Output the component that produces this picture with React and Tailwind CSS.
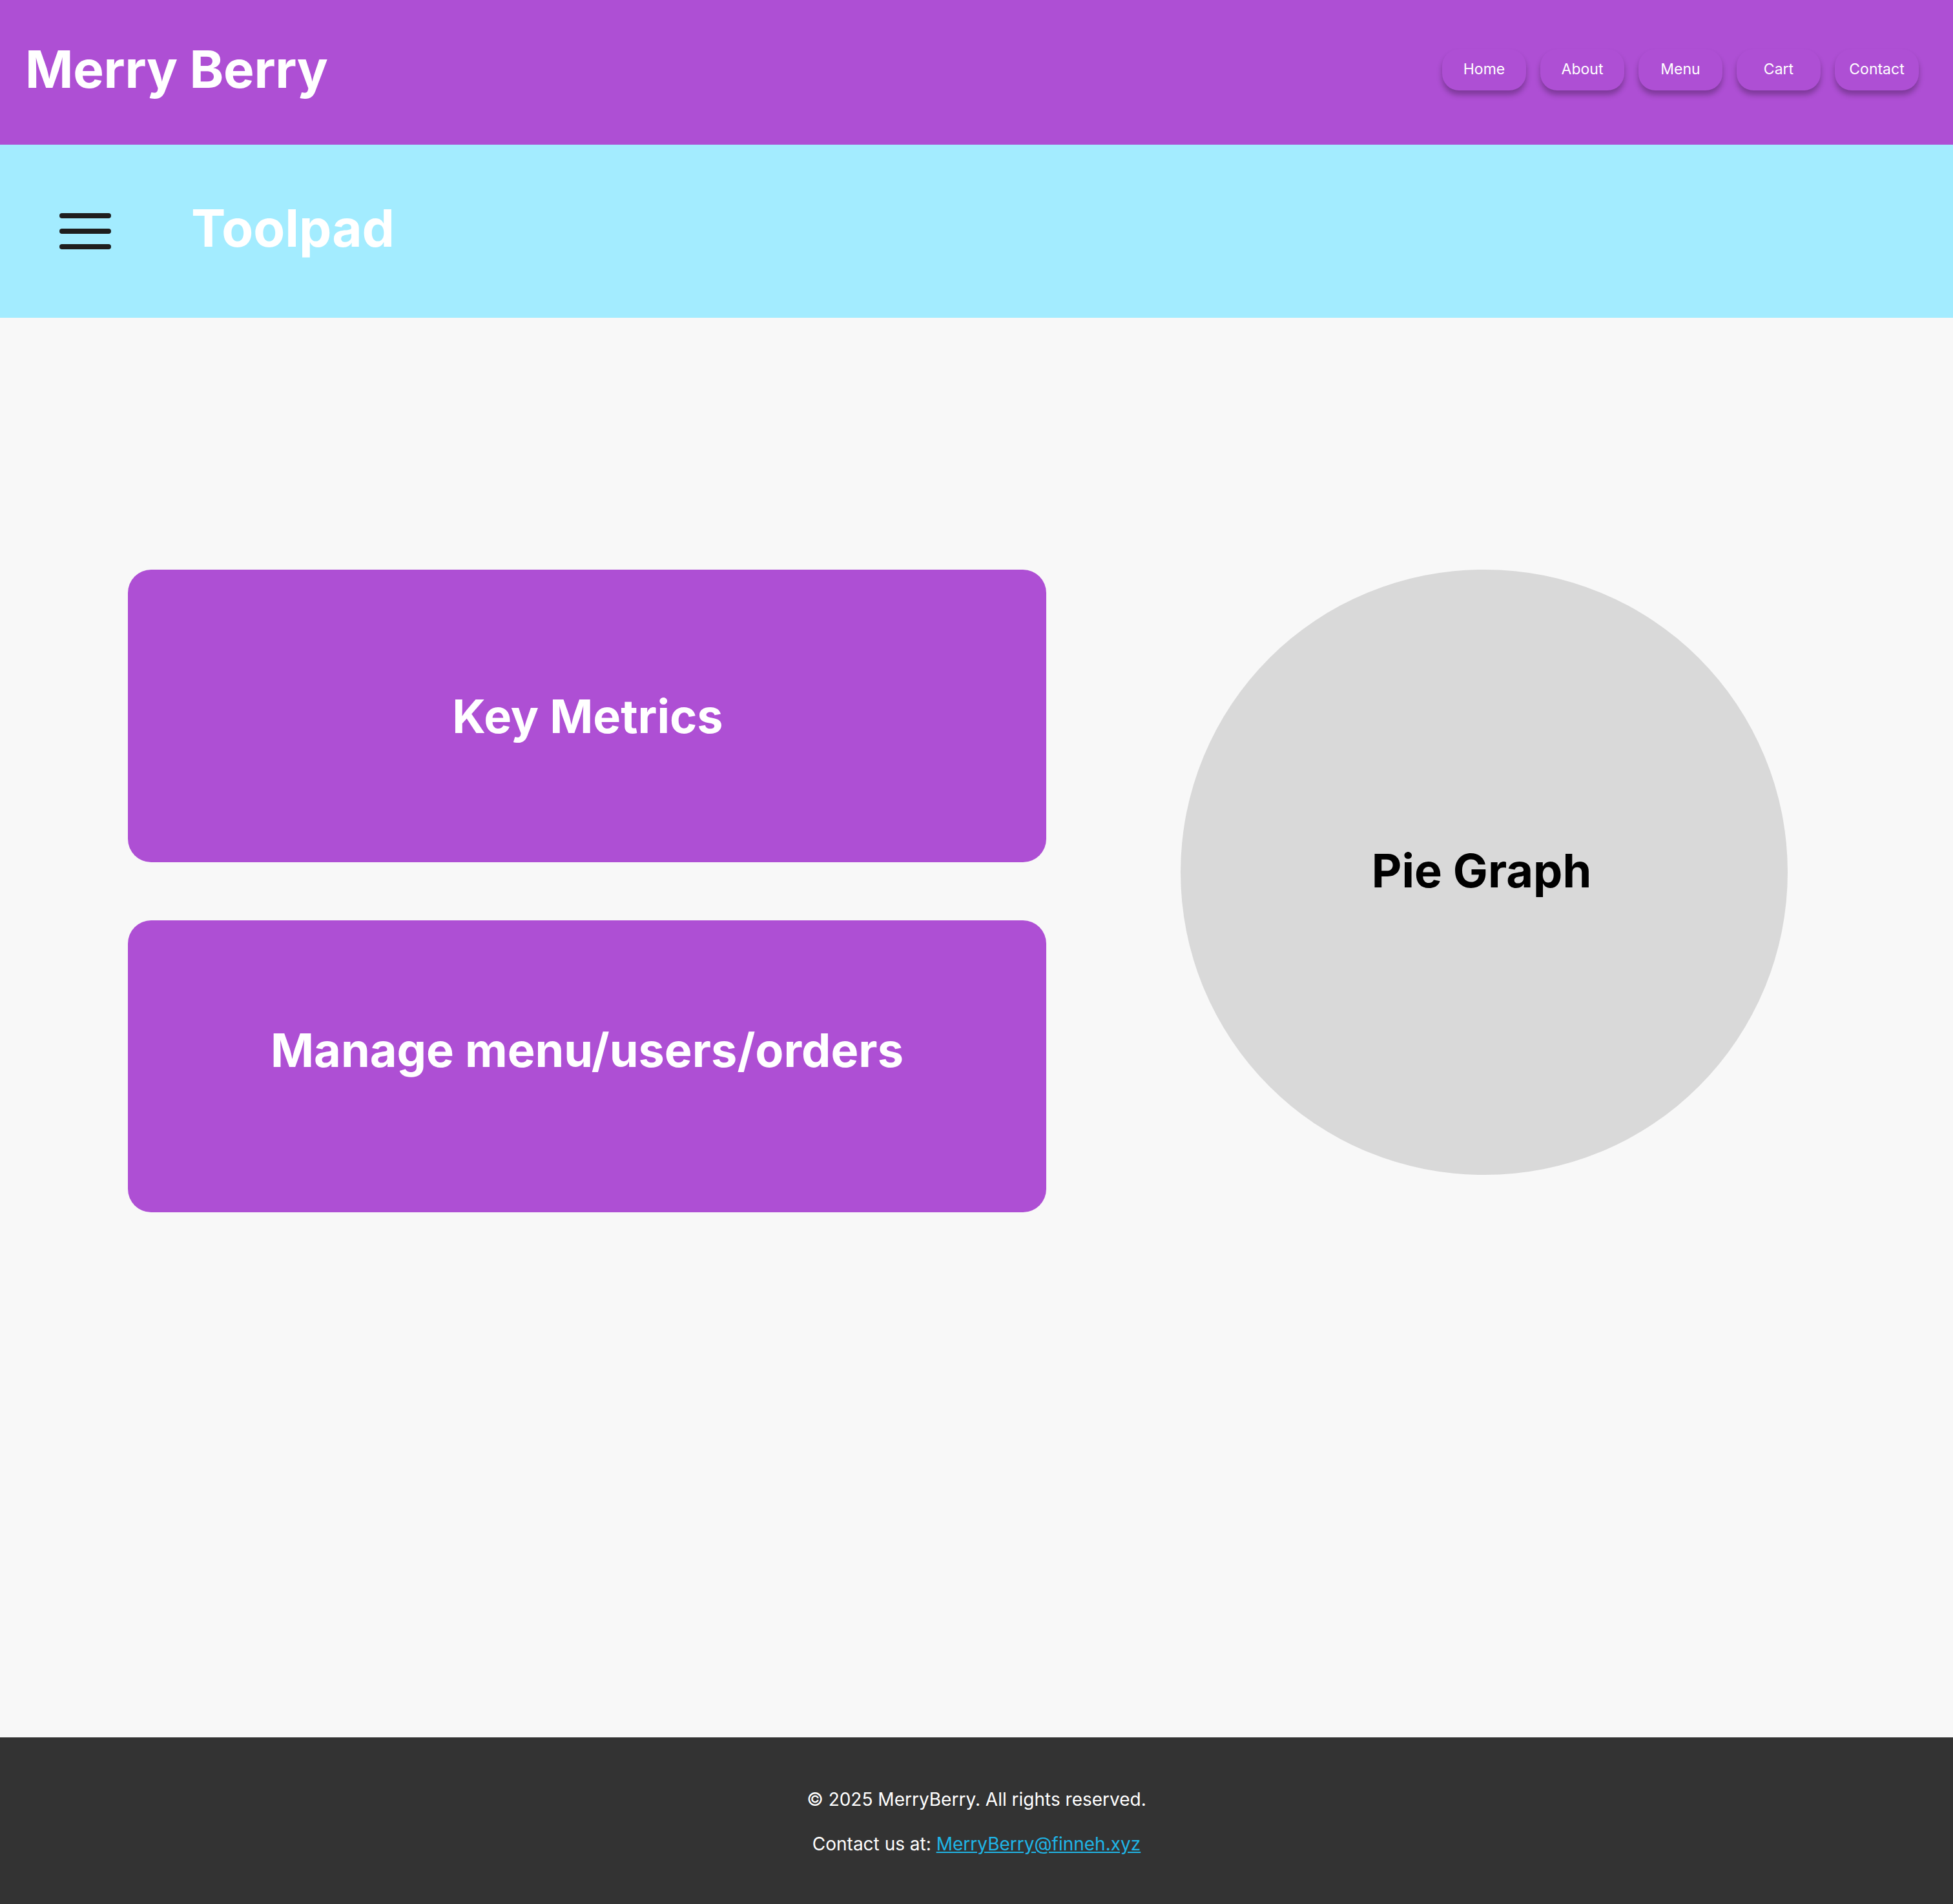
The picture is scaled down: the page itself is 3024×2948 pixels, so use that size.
import React from "react";

const navItems = ["Home", "About", "Menu", "Cart", "Contact"];

export default function App() {
  return (
    <div
      className="min-h-screen w-full flex flex-col bg-[#f8f8f8]"
      style={{ fontFamily: "Inter, 'Noto Sans', sans-serif" }}
    >
      {/* Top header */}
      <header className="h-[224px] bg-[#ae4fd4] flex items-center justify-between pl-[39px] pr-[53px]">
        <h1 className="text-[80px] font-bold text-white leading-none pb-[10px] tracking-[-0.3px]">
          Merry Berry
        </h1>
        <nav className="flex items-center gap-[22px] pb-[8px]">
          {navItems.map((item) => (
            <button
              key={item}
              className="w-[130px] h-[64px] rounded-[26px] bg-[#ae4fd4] text-white text-[23px] font-normal shadow-[0_7px_8px_rgba(0,0,0,0.28)] flex items-center justify-center pb-[2px]"
            >
              {item}
            </button>
          ))}
        </nav>
      </header>

      {/* Toolpad bar */}
      <section className="h-[268px] bg-[#a3ecff] flex items-center pl-[92px]">
        <div className="flex flex-col gap-[16px] w-[80px]">
          <div className="h-[8px] w-[80px] rounded-full bg-[#1e1e1e]" />
          <div className="h-[8px] w-[80px] rounded-full bg-[#1e1e1e]" />
          <div className="h-[8px] w-[80px] rounded-full bg-[#1e1e1e]" />
        </div>
        <h2 className="ml-[124px] text-[80px] font-bold text-white leading-none pb-[10px]">
          Toolpad
        </h2>
      </section>

      {/* Main content */}
      <main className="flex-1 h-[2198px] pt-[390px] pl-[198px]">
        <div className="flex items-start gap-[208px]">
          <div className="flex flex-col gap-[90px]">
            <div className="w-[1422px] h-[453px] rounded-[36px] bg-[#ae4fd4] flex items-center justify-center">
              <span className="text-[72px] font-bold text-white leading-none pl-[2px]">
                Key Metrics
              </span>
            </div>
            <div className="w-[1422px] h-[452px] rounded-[36px] bg-[#ae4fd4] flex items-center justify-center">
              <span className="text-[72px] font-bold text-white leading-none pb-[50px]">
                Manage menu/users/orders
              </span>
            </div>
          </div>
          <div className="w-[940px] h-[937px] rounded-full bg-[#d9d9d9] flex items-center justify-center">
            <span className="text-[72px] font-bold text-black leading-none pb-[6px] pr-[8px]">
              Pie Graph
            </span>
          </div>
        </div>
      </main>

      {/* Footer */}
      <footer className="h-[258px] bg-[#333333] flex flex-col items-center pt-[79px] gap-[35px] text-white text-[28px] leading-[34px]">
        <p>© 2025 MerryBerry. All rights reserved.</p>
        <p>
          Contact us at:{" "}
          <a href="#" className="text-[#1fb5e6] underline">
            MerryBerry@finneh.xyz
          </a>
        </p>
      </footer>
    </div>
  );
}
